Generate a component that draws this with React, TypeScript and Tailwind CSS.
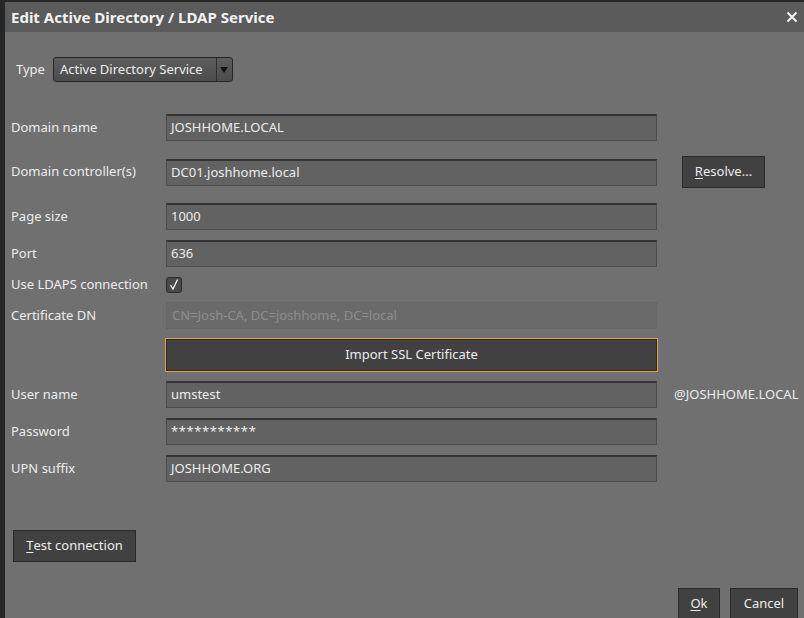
import React from "react";

const font = { fontFamily: '"Noto Sans", "Open Sans", sans-serif' };

// Underlined mnemonic letter, Qt style
function Mn({ c }: { c: string }) {
  return <span className="underline underline-offset-2">{c}</span>;
}

function Field({ value, disabled = false, wide = false }: { value: string; disabled?: boolean; wide?: boolean }) {
  return (
    <div
      className={
        disabled
          ? "w-[491px] h-[27px] flex items-center px-[5px] bg-[#6a6a6a] border border-[#666] text-[#8e8e8e]"
          : `w-[491px] h-[27px] flex items-center px-[4px] bg-[#626262] border border-[#4c4c4c] border-t-2 border-t-[#333] text-[#ececec] ${wide ? "tracking-[0.6px]" : ""}`
      }
    >
      {value}
    </div>
  );
}

function Row({ label, mt, children }: { label: string; mt: string; children: React.ReactNode }) {
  return (
    <div className={`flex items-center ${mt}`}>
      <div className="w-[161px] pl-[6px] shrink-0 text-[#ececec]">{label}</div>
      {children}
    </div>
  );
}

function Btn({ children, className = "" }: { children: React.ReactNode; className?: string }) {
  return (
    <div
      className={`h-[32px] flex items-center justify-center bg-[#414141] border border-[#2a2a2a] text-[#ececec] ${className}`}
    >
      {children}
    </div>
  );
}

export default function App() {
  return (
    <div
      className="w-[804px] h-[618px] overflow-hidden bg-[#262626] pt-[2px] pl-[5px] flex flex-col text-[13px]"
      style={font}
    >
      {/* title bar */}
      <div className="h-[30px] shrink-0 bg-[#5b5b5b] flex items-center justify-between pl-[6px] pr-[6px]">
        <span className="text-[15px] font-bold text-[#f2f2f2]">Edit Active Directory / LDAP Service</span>
        <svg width="12" height="12" viewBox="0 0 12 12">
          <path d="M1.5 1.5 L10.5 10.5 M10.5 1.5 L1.5 10.5" stroke="#f4f4f4" strokeWidth="2" />
        </svg>
      </div>

      <div className="flex-1 bg-[#707070] flex flex-col">
        {/* type */}
        <div className="flex items-center mt-[25px] pl-[11px]">
          <span className="text-[#ececec] mr-[8px]">Type</span>
          <div className="w-[180px] h-[25px] rounded-[3px] border border-[#262626] bg-gradient-to-b from-[#5e5e5e] to-[#4c4c4c] flex items-center">
            <span className="flex-1 pl-[6px] text-[#ececec]">Active Directory Service</span>
            <div className="w-[16px] h-full border-l border-[#2e2e2e] flex items-center justify-center">
              <svg width="8" height="6" viewBox="0 0 8 6">
                <path d="M0 0 H8 L4 6 Z" fill="#111" />
              </svg>
            </div>
          </div>
        </div>

        <Row label="Domain name" mt="mt-[32px]">
          <Field value="JOSHHOME.LOCAL" />
        </Row>

        <Row label="Domain controller(s)" mt="mt-[15px] h-[32px]">
          <Field value="DC01.joshhome.local" />
          <Btn className="ml-[25px] w-[83px]">
            <Mn c="R" />
            esolve...
          </Btn>
        </Row>

        <Row label="Page size" mt="mt-[15px]">
          <Field value="1000" />
        </Row>

        <Row label="Port" mt="mt-[10px]">
          <Field value="636" />
        </Row>

        <Row label="Use LDAPS connection" mt="mt-[9px] h-[17px]">
          <div className="w-[16px] h-[16px] rounded-[3px] bg-[#4a4a4a] border border-[#2a2a2a] flex items-center justify-center">
            <svg width="10" height="11" viewBox="0 0 10 11">
              <path d="M1.5 6 L4 10 L8.5 0.5" stroke="#eee" strokeWidth="1.4" fill="none" />
            </svg>
          </div>
        </Row>

        <Row label="Certificate DN" mt="mt-[9px]">
          <Field value="CN=Josh-CA, DC=joshhome, DC=local" disabled />
        </Row>

        <div className="flex mt-[9px] pl-[160px]">
          <div className="w-[493px] h-[34px] flex items-center justify-center bg-[#414141] border border-[#dfa53c] shadow-[inset_0_0_0_1px_#2a2a2a] text-[#ececec]">
            Import SSL Certificate
          </div>
        </div>

        <Row label="User name" mt="mt-[9px]">
          <Field value="umstest" />
          <span className="ml-[17px] text-[#ececec]">@JOSHHOME.LOCAL</span>
        </Row>

        <Row label="Password" mt="mt-[10px]">
          <Field value="***********" wide />
        </Row>

        <Row label="UPN suffix" mt="mt-[10px]">
          <Field value="JOSHHOME.ORG" />
        </Row>

        <div className="flex mt-[48px] pl-[8px]">
          <Btn className="w-[123px]">
            <Mn c="T" />
            est connection
          </Btn>
        </div>

        <div className="flex justify-end mt-[26px] pr-[6px] gap-[10px]">
          <Btn className="w-[42px]">
            <Mn c="O" />k
          </Btn>
          <Btn className="w-[68px]">Cancel</Btn>
        </div>
      </div>
    </div>
  );
}
